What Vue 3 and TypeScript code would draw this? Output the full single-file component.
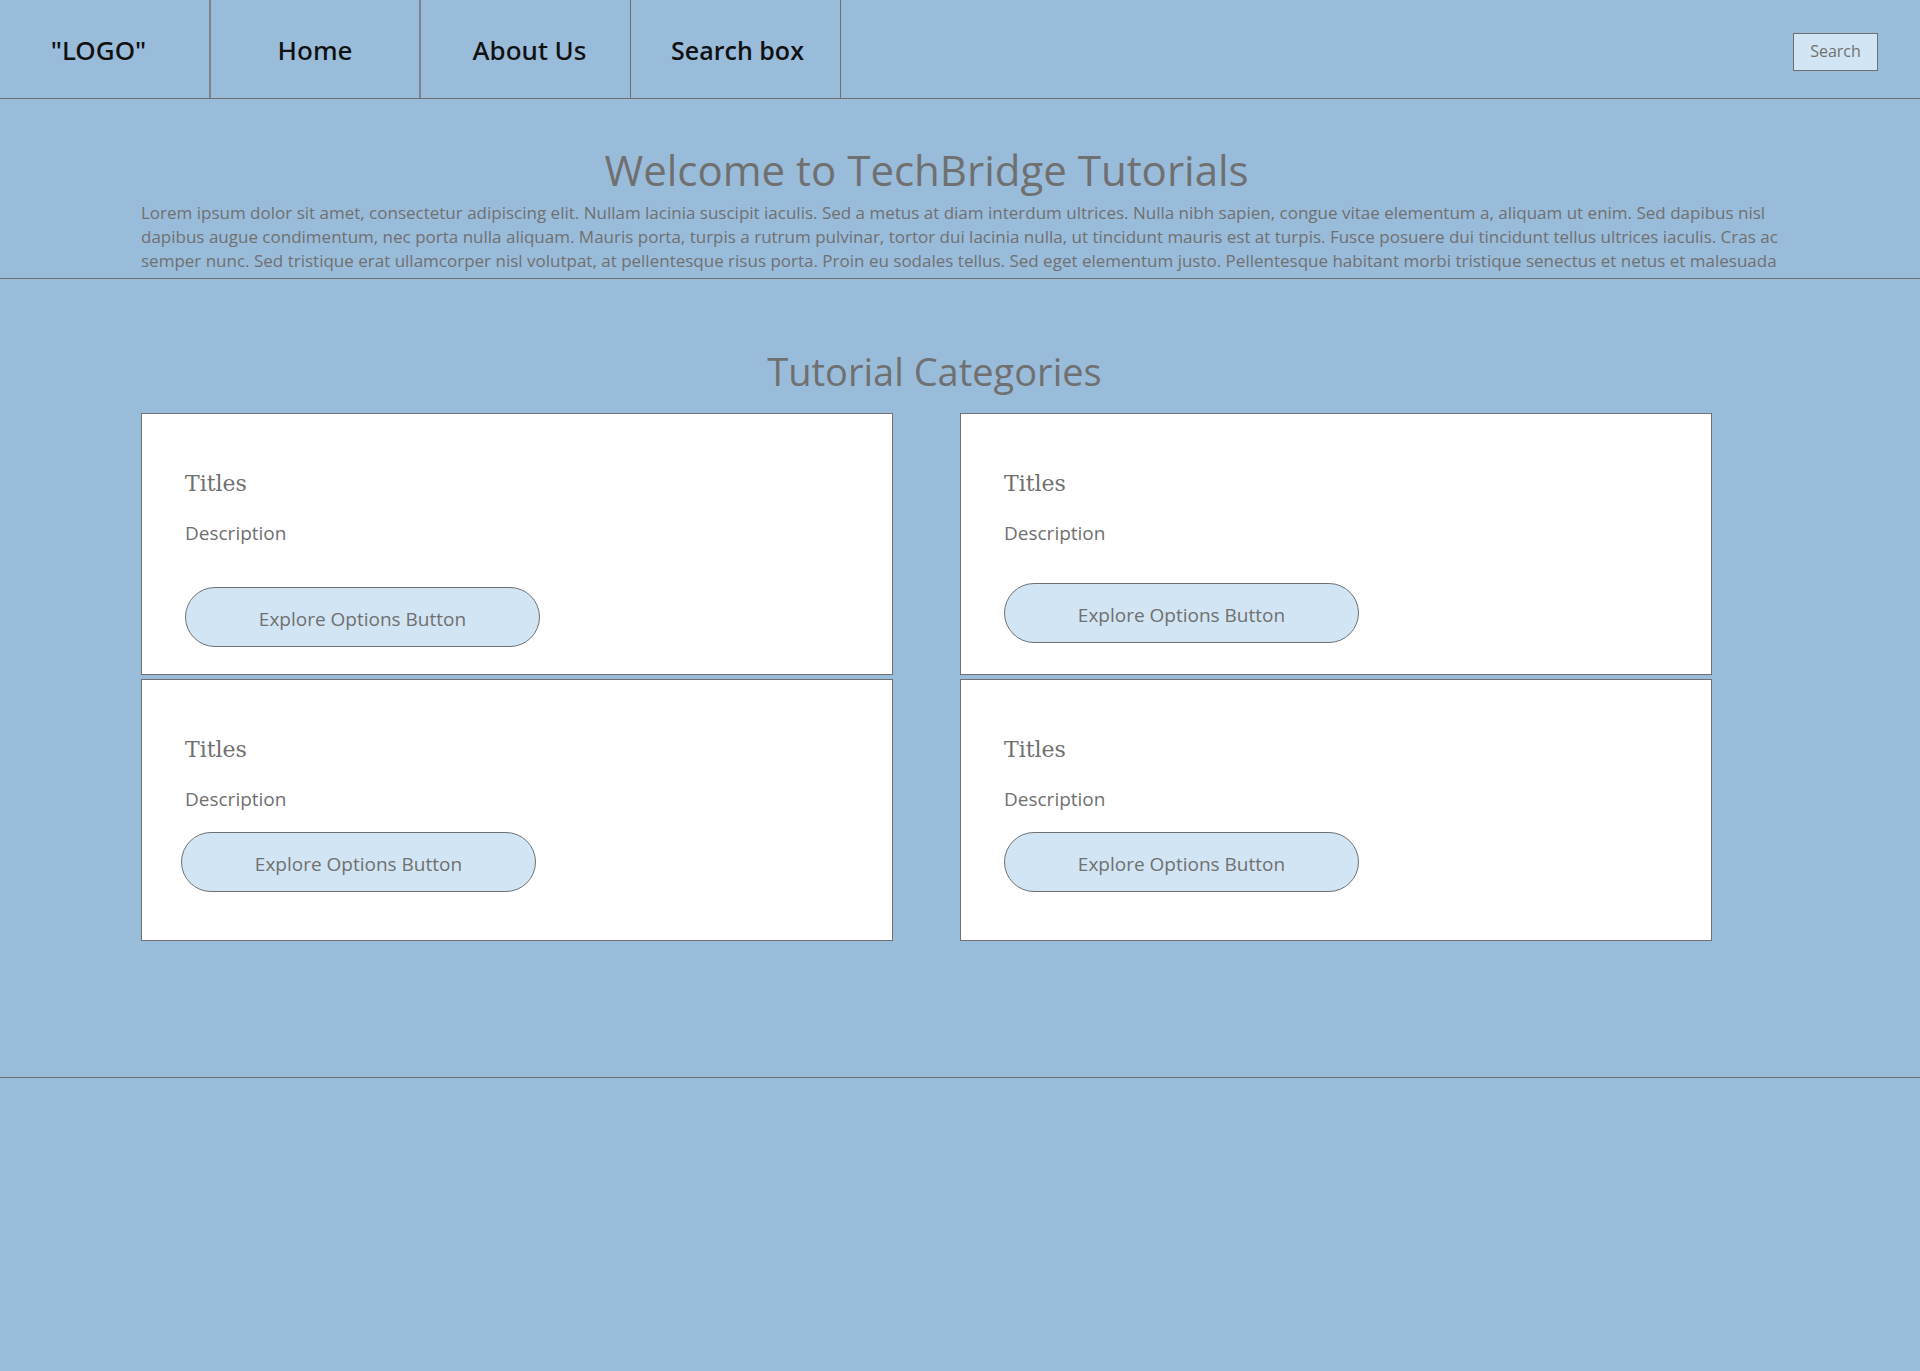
<script setup lang="ts">
interface NavItem {
  label: string
  variant: string
}

interface Category {
  id: number
  title: string
  description: string
  variant: string
}

const navItems: NavItem[] = [
  { label: '"LOGO"', variant: 'nav-logo' },
  { label: 'Home', variant: 'nav-home' },
  { label: 'About Us', variant: 'nav-about' },
  { label: 'Search box', variant: 'nav-search' },
]

const categories: Category[] = [
  { id: 1, title: 'Titles', description: 'Description', variant: 'card-loose' },
  { id: 2, title: 'Titles', description: 'Description', variant: 'card-medium' },
  { id: 3, title: 'Titles', description: 'Description', variant: 'card-outset' },
  { id: 4, title: 'Titles', description: 'Description', variant: 'card-tight' },
]
</script>

<template>
  <div class="page">
    <header class="topbar">
      <nav class="nav">
        <a v-for="item in navItems" :key="item.label" href="#" class="nav-item" :class="item.variant">{{ item.label }}</a>
      </nav>
      <button type="button" class="search-button">Search</button>
    </header>

    <section class="hero">
      <h1>Welcome to TechBridge Tutorials</h1>
      <p>
        Lorem ipsum dolor sit amet, consectetur adipiscing elit. Nullam lacinia suscipit iaculis. Sed a metus at diam interdum ultrices. Nulla nibh sapien, congue vitae elementum a, aliquam ut enim. Sed dapibus nisl dapibus augue condimentum, nec porta nulla aliquam. Mauris porta, turpis a rutrum pulvinar, tortor dui lacinia nulla, ut tincidunt mauris est at turpis. Fusce posuere dui tincidunt tellus ultrices iaculis. Cras ac semper nunc. Sed tristique erat ullamcorper nisl volutpat, at pellentesque risus porta. Proin eu sodales tellus. Sed eget elementum justo. Pellentesque habitant morbi tristique senectus et netus et malesuada
      </p>
    </section>

    <main class="categories">
      <h2>Tutorial Categories</h2>
      <div class="grid">
        <article v-for="category in categories" :key="category.id" class="card" :class="category.variant">
          <h3>{{ category.title }}</h3>
          <p>{{ category.description }}</p>
          <button type="button" class="explore">Explore Options Button</button>
        </article>
      </div>
    </main>

    <footer class="footer"></footer>
  </div>
</template>

<style>
body {
  margin: 0;
  background: #9abcdb;
}
</style>

<style scoped>
.page {
  min-height: 100vh;
  display: flex;
  flex-direction: column;
  background: #9abcdb;
  color: #707070;
  font-family: "Open Sans", "Noto Sans", sans-serif;
}

.page * {
  box-sizing: border-box;
}

h1,
h2,
h3,
p {
  margin: 0;
  font-weight: 400;
}

.topbar {
  display: flex;
  align-items: stretch;
  justify-content: space-between;
  height: 99px;
  padding-right: 42px;
  border-bottom: 1px solid #707070;
}

.nav {
  display: flex;
}

.nav-item {
  display: flex;
  align-items: center;
  justify-content: center;
  width: 210px;
  padding-top: 2px;
  border-right: 1px solid #707070;
  color: #111;
  font-family: "Noto Sans", "Open Sans", sans-serif;
  font-size: 26px;
  font-weight: 500;
  line-height: 32px;
  text-decoration: none;
}

.nav-logo {
  width: 211px;
  padding-right: 12px;
  border-right: 2px solid #7b838c;
}

.nav-home {
  border-right: 2px solid #7b838c;
}

.nav-about {
  padding-left: 8px;
}

.nav-search {
  padding-left: 4px;
  font-family: "Open Sans", "Noto Sans", sans-serif;
  font-size: 25px;
  font-weight: 600;
}

.search-button {
  width: 85px;
  height: 38px;
  margin-top: 33px;
  padding: 0 0 2px;
  border: 1px solid #707070;
  background: #d2e5f4;
  color: #707070;
  font-family: inherit;
  font-size: 16px;
  line-height: 20px;
}

.hero {
  padding: 40px 140px 5px 141px;
  border-bottom: 1px solid #707070;
}

.hero h1 {
  padding-right: 68px;
  font-size: 42px;
  line-height: 62px;
  text-align: center;
}

.hero p {
  font-size: 17px;
  line-height: 24px;
}

.categories {
  padding: 62px 208px 136px 141px;
}

.categories h2 {
  padding: 0 0 12px 16px;
  font-size: 38px;
  line-height: 60px;
  text-align: center;
}

.grid {
  display: grid;
  grid-template-columns: 1fr 1fr;
  gap: 4px 67px;
}

.card {
  display: flex;
  flex-direction: column;
  align-items: flex-start;
  height: 262px;
  padding: 54px 43px 0;
  border: 1px solid #707070;
  background: #fff;
}

.card h3 {
  font-family: "DejaVu Serif", serif;
  font-size: 22px;
  line-height: 32px;
}

.card p {
  margin-top: 18px;
  font-size: 19px;
  line-height: 30px;
}

.explore {
  width: 355px;
  height: 60px;
  padding: 4px 0 0;
  border: 1px solid #707070;
  border-radius: 30px;
  background: #d2e5f4;
  color: #707070;
  font-family: inherit;
  font-size: 19px;
  line-height: 28px;
}

.card-loose .explore {
  margin-top: 39px;
}

.card-medium .explore {
  margin-top: 35px;
}

.card-outset .explore {
  margin-top: 18px;
  margin-left: -4px;
}

.card-tight .explore {
  margin-top: 18px;
}

.footer {
  flex: 1;
  border-top: 1px solid #707070;
}
</style>
